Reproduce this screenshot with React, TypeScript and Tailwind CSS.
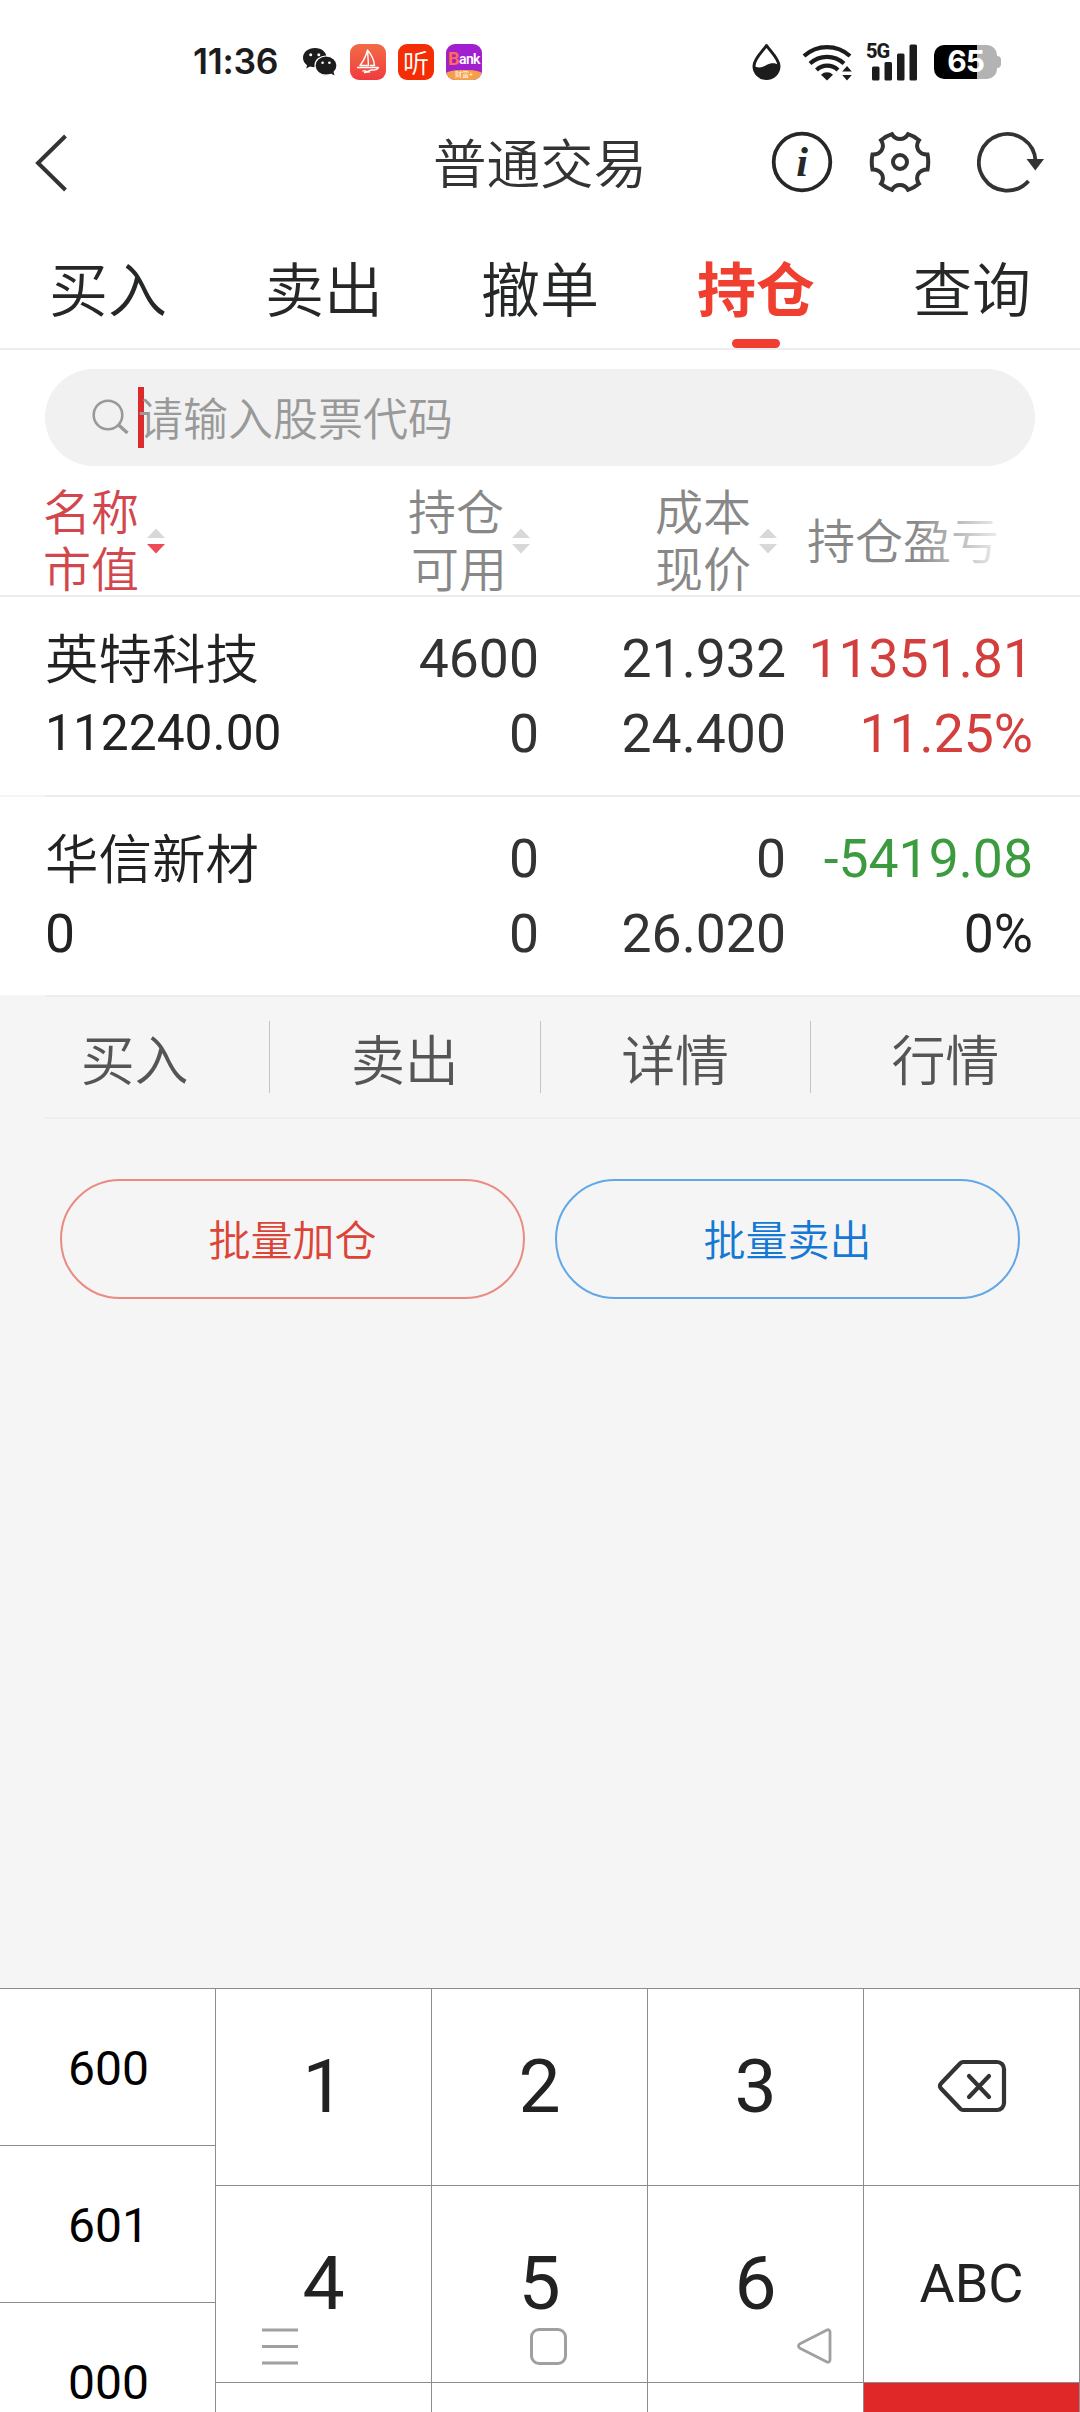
import clsx from 'clsx';
import type { ReactNode } from 'react';

const tabs = ['买入', '卖出', '撤单', '持仓', '查询'];
const actions = ['买入', '卖出', '详情', '行情'];
const prefixes = ['600', '601', '000'];

const holdings = [
  {
    name: '英特科技',
    value: '112240.00',
    amount: '4600',
    usable: '0',
    cost: '21.932',
    price: '24.400',
    profit: '11351.81',
    rate: '11.25%',
    profitColor: 'text-[#d23f3d]',
    rateColor: 'text-[#d23f3d]',
    valueSize: 'text-[49.7px]',
  },
  {
    name: '华信新材',
    value: '0',
    amount: '0',
    usable: '0',
    cost: '0',
    price: '26.020',
    profit: '-5419.08',
    rate: '0%',
    profitColor: 'text-[#3c9b3f]',
    rateColor: 'text-[#222]',
    valueSize: 'text-[53.5px]',
  },
];

function StatusBar() {
  return (
    <div className="flex h-[110px] shrink-0 items-center pt-[13px] pr-[79px] pl-[193px]">
      <span className="w-[109px] font-[Inter] text-[35.5px] font-semibold tracking-[-0.3px] text-[#1c1c1c]">11:36</span>
      <svg className="h-[29px] w-[35px]" viewBox="0 0 35 29" fill="#1c1c1c">
        <path d="M13 1C6 1 1 5.300 1 10.800c0 3 1.600 5.600 4.100 7.400l-1 3.300 3.900-2c1.600.5 3.300.7 5.100.7C20 20.200 24.500 16 24.500 10.600S19.800 1 13 1z" />
        <ellipse cx="24" cy="18.600" rx="11" ry="9.600" stroke="#fff" strokeWidth="1.200" />
        <path d="M28 26l4.500 2.400-1-3.600z" />
        <g fill="#fff">
          <circle cx="8.700" cy="7.800" r="1.500" />
          <circle cx="16.800" cy="7.800" r="1.500" />
          <circle cx="20.600" cy="15.800" r="1.300" />
          <circle cx="27.400" cy="15.800" r="1.300" />
        </g>
      </svg>
      <div className="ml-[13px] size-9 rounded-[9px] bg-linear-to-b from-[#f26a47] to-[#f03a3f]">
        <svg viewBox="0 0 36 36" fill="none" stroke="#fff" strokeWidth="1.400" strokeLinejoin="round" strokeLinecap="round">
          <path d="M17.500 6C16 12 13.500 17 10 21.500h8.500L17.500 6c3.500 4 6.500 10 7 15.500h-4M7.500 23.500h21c-1 1.500-3 3-6 2.500s-4 2-6 1.500-2-1.500-3.500-.5M14.500 28.500c2 .3 3.500-1 5-.5" />
        </svg>
      </div>
      <div className="ml-3 flex size-9 items-center justify-center rounded-[9px] bg-[#f52d05] font-['Noto_Sans_CJK_SC',sans-serif] text-[26px] leading-none font-[350] text-white">
        听
      </div>
      <div className="ml-3 flex size-9 flex-col overflow-hidden rounded-[9px] bg-[#a21fd0]">
        <div className="flex h-[26px] items-center justify-center pt-1 font-['Roboto'] text-[14px] leading-none font-semibold tracking-[-0.6px] text-white">
          <span className="text-[18px] font-bold text-[#ff6a50]">B</span>ank
        </div>
        <div className="flex h-[10px] items-center justify-center rounded-t-[40%] bg-[#f5a048] font-['Noto_Sans_CJK_SC',sans-serif] text-[7px] leading-none text-white">
          财富+
        </div>
      </div>
      <div className="ml-auto flex items-center">
        <svg className="mr-[20px] h-[38px] w-[31px]" viewBox="0 0 31 38">
          <path d="M15.500 2.500C12 8 3 15.500 3 23a12.500 12.500 0 0 0 25 0C28 15.500 19 8 15.500 2.500z" fill="none" stroke="#1c1c1c" strokeWidth="3" strokeLinejoin="round" />
          <path d="M3 23c4 2.500 8 1.500 12.500-1 4-2.200 8.500-2.500 12.500 0a12.500 12.500 0 1 1-25 1z" fill="#1c1c1c" />
        </svg>
        <svg className="mr-[14px] h-[38px] w-[50px]" viewBox="0 0 50 38" fill="none" stroke="#1c1c1c" strokeWidth="4.200">
          <path d="M2 13a34 34 0 0 1 46 0M8 20.500a25 25 0 0 1 34 0M14.500 27a15.500 15.500 0 0 1 21.500 0" />
          <path d="M25 37.500l-6-5.800a8.800 8.800 0 0 1 12 0z" fill="#1c1c1c" stroke="none" />
          <path d="M45 23l4.800 5.500h-9.600zM45 37.500l-4.800-5.500h9.600z" fill="#1c1c1c" stroke="none" />
        </svg>
        <div className="relative mr-[17px] h-[38px] w-[51px]">
          <span className="absolute -top-[1px] left-0 font-['Roboto'] text-[20px] leading-[18px] font-extrabold tracking-[-1px] text-[#1c1c1c]">5G</span>
          <svg viewBox="0 0 51 38" fill="#1c1c1c">
            <rect x="6" y="23.500" width="7.500" height="14" rx="1.500" />
            <rect x="18.500" y="19" width="7.500" height="18.500" rx="1.500" />
            <rect x="31" y="10.500" width="7.500" height="27" rx="1.500" />
            <rect x="43.500" y="1.500" width="7.500" height="36" rx="1.500" />
          </svg>
        </div>
        <div className="flex items-center">
          <div className="flex h-[34px] w-[63px] items-center justify-center rounded-[10px] bg-linear-to-r from-black from-69% to-[#b3b3b3] to-69% font-[Inter] text-[30px] font-bold tracking-[-1px] text-white">
            65
          </div>
          <div className="h-3 w-[4px] rounded-r-full bg-[#b3b3b3]" />
        </div>
      </div>
    </div>
  );
}

function Header() {
  return (
    <header className="grid h-[105px] shrink-0 grid-cols-[1fr_auto_1fr] items-center">
      <svg className="ml-[34px] h-[60px] w-9" viewBox="0 0 36 60" fill="none" stroke="#333" strokeWidth="4">
        <path d="M31.500 3L4 30l27.500 27" />
      </svg>
      <h1 className="pt-[7px] text-[53.5px] leading-none font-[350] text-[#333]">普通交易</h1>
      <div className="mr-[35px] mb-[2px] flex items-center justify-end">
        <svg className="mr-[36px] size-[62px]" viewBox="0 0 62 62">
          <circle cx="31" cy="31" r="28.300" fill="none" stroke="#252827" strokeWidth="3.800" />
          <text x="31" y="45" textAnchor="middle" fontFamily="Liberation Serif, serif" fontStyle="italic" fontWeight="700" fontSize="42" fill="#252827">
            i
          </text>
        </svg>
        <svg className="mr-[46px] size-[62px]" viewBox="0 0 62 62" fill="none" stroke="#333" strokeWidth="4">
          <path d="M23 3.200C26.500 9.500 35.500 9.500 39 3.200Q45 5 50 9.200C45.500 16 49.500 23.500 58.500 23.500Q60 31 58.500 38.500C49.500 38.500 45.500 46 50 52.800Q45 57 39 58.800C35.500 52.500 26.500 52.500 23 58.800Q17 57 12 52.800C16.500 46 12.500 38.500 3.500 38.500Q2 31 3.500 23.500C12.500 23.500 16.500 16 12 9.200Q17 5 23 3.200z" />
          <circle cx="31" cy="31" r="7" />
        </svg>
        <svg className="h-[62px] w-[68px]" viewBox="0 0 68 62" fill="none" stroke="#333" strokeWidth="3.800">
          <path d="M51.500 50A28.300 28.300 0 1 1 58.500 30" />
          <path d="M49.500 28h17.500l-8.700 11.500z" fill="#333" stroke="none" />
        </svg>
      </div>
    </header>
  );
}

function SortIcon({ active }: { active?: boolean }) {
  return (
    <svg className="h-[26px] w-[18px] shrink-0" viewBox="0 0 18 26" fill="#d8d8d8">
      <path d="M9 0.500l9 9.500H0z" />
      <path d="M9 25.500L0 16h18z" fill={active ? '#ee4b56' : '#d8d8d8'} />
    </svg>
  );
}

function HeaderCell({ children, className }: { children: ReactNode; className?: string }) {
  return (
    <div className={clsx('flex items-center justify-end gap-2 text-[48px] leading-[57px] font-[350] whitespace-nowrap', className)}>
      {children}
    </div>
  );
}

function TableHeader() {
  return (
    <div className="relative flex h-[131px] shrink-0 border-b-2 border-[#ededed] pt-[20px] pl-[45px] text-[#888]">
      <HeaderCell className="w-[120px] gap-1.5 text-[#d2474d]">
        <div className="pt-[2px]">名称<br />市值</div>
        <SortIcon active />
      </HeaderCell>
      <HeaderCell className="w-[365px]">
        <div className="pt-[2px] text-right">持仓<br /><span className="-mr-[3px]">可用</span></div>
        <SortIcon />
      </HeaderCell>
      <HeaderCell className="w-[247px]">
        <div className="pt-[2px] text-right">成本<br />现价</div>
        <SortIcon />
      </HeaderCell>
      <HeaderCell className="w-[248px]">
        <div className="pt-1">持仓盈亏</div>
        <SortIcon />
      </HeaderCell>
      <div className="absolute top-0 right-0 h-[128px] w-[165px] bg-linear-to-r from-transparent to-white to-60%" />
    </div>
  );
}

function HoldingRow({ item }: { item: (typeof holdings)[number] }) {
  return (
    <div className="flex h-[200px] shrink-0 flex-col">
      <div className="flex flex-1 pt-6 text-[53.5px] leading-[75px]">
        <div className="w-[300px] pl-[45px] text-[#222]">
          <div className="h-[75px] pt-[2px] font-[350]">{item.name}</div>
          <div className={item.valueSize}>{item.value}</div>
        </div>
        <div className="w-[239px] text-right text-[#333]">
          <div>{item.amount}</div>
          <div>{item.usable}</div>
        </div>
        <div className="w-[247px] text-right text-[#333]">
          <div>{item.cost}</div>
          <div>{item.price}</div>
        </div>
        <div className="w-[247px] text-right">
          <div className={item.profitColor}>{item.profit}</div>
          <div className={item.rateColor}>{item.rate}</div>
        </div>
      </div>
      <div className="flex h-0.5 bg-[#f5f5f5] pl-[45px]">
        <div className="flex-1 bg-[#ededed]" />
      </div>
    </div>
  );
}

function Key({ children, className }: { children?: ReactNode; className?: string }) {
  return (
    <div className={clsx('flex h-[197px] items-center justify-center border-r border-b border-[#8c8c8c] pb-[2px] text-[#222]', className)}>
      {children}
    </div>
  );
}

function Keyboard() {
  return (
    <div className="relative flex h-[424px] shrink-0 overflow-hidden border-t border-[#8c8c8c] bg-white">
      <div className="w-[216px] border-r border-[#8c8c8c]">
        {prefixes.map((p) => (
          <div key={p} className="flex h-[157px] items-center justify-center border-b border-[#8c8c8c] pt-[3px] pl-[2px] text-[48px] text-black">
            {p}
          </div>
        ))}
      </div>
      <div className="grid flex-1 auto-rows-[197px] grid-cols-4 text-[75px]">
        <Key>1</Key>
        <Key>2</Key>
        <Key>3</Key>
        <Key className="pb-0">
          <svg className="h-[54px] w-[70px]" viewBox="0 0 70 54" fill="none" stroke="#333" strokeWidth="4.200" strokeLinecap="round" strokeLinejoin="round">
            <path d="M26 3h34a7 7 0 0 1 7 7v34a7 7 0 0 1-7 7H26c-1 0-2-.5-2.700-1.200L4 29.500a3.500 3.500 0 0 1 0-5L23.300 4.200C24 3.500 25 3 26 3zM32 17l20 21M52 17L32 38" />
          </svg>
        </Key>
        <Key>4</Key>
        <Key>5</Key>
        <Key>6</Key>
        <Key className="text-[54px]">ABC</Key>
        <Key />
        <Key />
        <Key />
        <Key className="bg-[#e02828]" />
      </div>

      {/* system navigation, floats over the keys */}
      <div className="absolute top-[338px] left-0 flex w-full items-center pl-[261px]">
        <svg className="h-[38px] w-[38px]" viewBox="0 0 38 38" stroke="#a0a0a0" strokeWidth="3">
          <path d="M1 3h36M1 19.500h36M1 36h36" />
        </svg>
        <div className="ml-[231px] size-[37px] rounded-[9px] border-[3px] border-[#a0a0a0]" />
        <svg className="ml-[229px] h-[38px] w-[38px]" viewBox="0 0 38 38" fill="none" stroke="#a0a0a0" strokeWidth="2.800" strokeLinejoin="round">
          <path d="M31 3L4 16.700c-2 1-2 3.600 0 4.600L31 35c1.500.7 3-.3 3-2V5c0-1.700-1.500-2.700-3-2z" />
        </svg>
      </div>
    </div>
  );
}

export default function App() {
  return (
    <div className="flex h-[2412px] w-[1080px] flex-col overflow-hidden bg-[#f5f5f5] font-['Roboto','Noto_Sans_CJK_SC',sans-serif]">
      <div className="flex shrink-0 flex-col bg-white">
        <StatusBar />
        <Header />
        <nav className="flex h-[135px] border-b-2 border-[#ededed] text-[59px] text-[#252827]">
          {tabs.map((tab) => (
            <div key={tab} className="relative flex flex-1 items-center justify-center pt-5 leading-none">
              <span className={tab === '持仓' ? 'font-bold text-[#f03e30]' : 'font-[350]'}>{tab}</span>
              {tab === '持仓' && <div className="absolute bottom-0 h-[9px] w-12 rounded-full bg-[#f03e30]" />}
            </div>
          ))}
        </nav>
        <div className="mx-[45px] mt-[19px] flex h-[97px] items-center rounded-full bg-[#f1f1f1] pl-[47px] text-[45px] text-[#999]">
          <svg className="size-[37px]" viewBox="0 0 37 37" fill="none" stroke="#999" strokeWidth="2.600">
            <circle cx="16" cy="16" r="14.300" />
            <path d="M26 25.500l9.500 8.500" strokeWidth="3.500" />
          </svg>
          <div className="ml-[9px] h-[61px] w-1.5 bg-[#dc2b2c]" />
          <span className="-ml-1.5 pt-1.5 font-[350]">请输入股票代码</span>
        </div>
        <TableHeader />
        {holdings.map((item) => (
          <HoldingRow key={item.name} item={item} />
        ))}
      </div>

      <div className="flex h-[120px] shrink-0 items-center">
        {actions.map((label, i) => (
          <div key={label} className={clsx('flex h-[72px] flex-1 items-center justify-center pt-[10px] text-[54px] font-[350] text-[#555]', i < 3 && 'border-r border-[#c4c4c4]')}>
            {label}
          </div>
        ))}
      </div>
      <div className="ml-[45px] h-0.5 shrink-0 bg-[#eee]" />

      <div className="mx-[60px] mt-[60px] flex gap-[30px] text-[42px] font-[350]">
        <button className="h-[120px] flex-1 rounded-full border-2 border-[#ea8b82] pt-1 text-[#db4437]">批量加仓</button>
        <button className="h-[120px] flex-1 rounded-full border-2 border-[#62a8e6] pt-1 text-[#1478d4]">批量卖出</button>
      </div>

      <div className="flex-1" />
      <Keyboard />
    </div>
  );
}
